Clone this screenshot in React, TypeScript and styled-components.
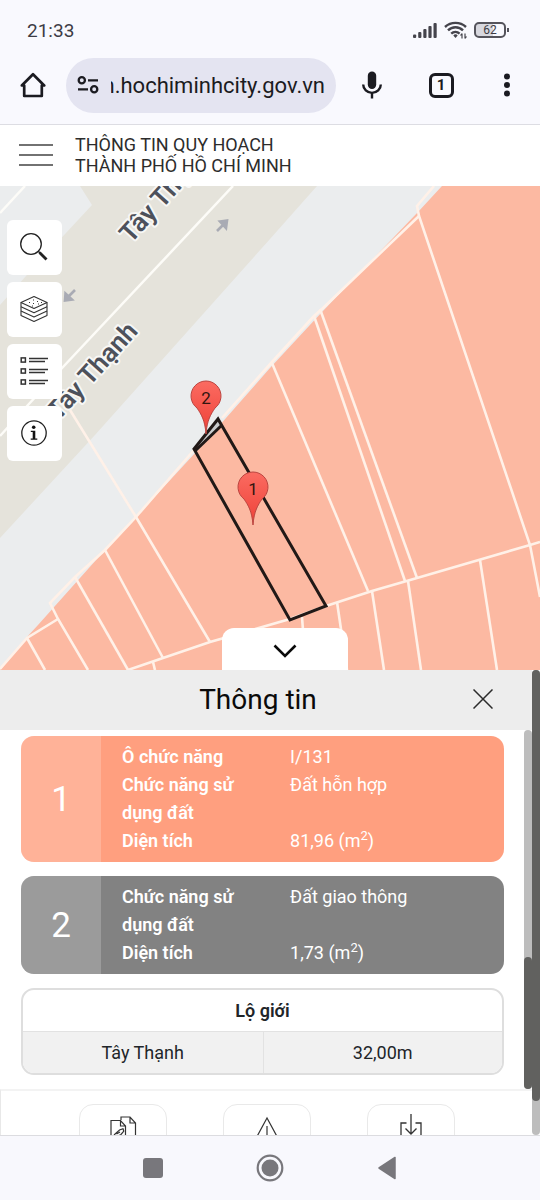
import React from "react";
import styled, { createGlobalStyle } from "styled-components";

const GlobalStyle = createGlobalStyle`
  *, *::before, *::after { box-sizing: border-box; }
  body {
    margin: 0;
    background: #f9f9fe;
    font-family: Roboto, "Noto Sans", sans-serif;
    color: #212529;
  }
  button, input { font: inherit; color: inherit; border: 0; padding: 0; background: none; }
  button { display: inline-flex; align-items: center; justify-content: center; cursor: pointer; }
  svg { display: block; }
`;

const Screen = styled.div`
  display: flex;
  flex-direction: column;
  min-height: 100vh;
  overflow: hidden;
`;

/* ---------- Phone status bar ---------- */

const StatusBar = styled.div`
  display: flex;
  align-items: center;
  justify-content: space-between;
  height: 58px;
  padding: 2px 34px 0 27px;
  font-size: 19px;
  color: #3d3c45;
`;

const StatusIcons = styled.div`
  display: flex;
  align-items: center;
  gap: 7px;
`;

const Battery = styled.span`
  position: relative;
  width: 32px;
  height: 16px;
  border: 2px solid #55545c;
  border-radius: 5px;
  background: linear-gradient(90deg, #d8d8df 60%, #f9f9fe 60%);
  font-size: 12px;
  line-height: 13px;
  text-align: center;

  &::after {
    content: "";
    position: absolute;
    right: -5px;
    top: 4px;
    width: 2px;
    height: 4px;
    background: #55545c;
  }
`;

/* ---------- Browser bar ---------- */

const BrowserBar = styled.div`
  display: flex;
  align-items: center;
  height: 67px;
  padding-bottom: 12px;
  border-bottom: 1px solid #dddde3;
  color: #1b1b21;
`;

const BarButton = styled.button<{ $width: number }>`
  flex: none;
  width: ${(p) => p.$width}px;
  height: 48px;
`;

const AddressPill = styled.label`
  display: flex;
  flex: 1;
  align-items: center;
  gap: 12px;
  min-width: 0;
  height: 55px;
  padding: 0 11px;
  border-radius: 28px;
  background: #e4e4f1;
`;

const AddressInput = styled.input`
  flex: 1;
  min-width: 0;
  padding-top: 2px;
  font-size: 22px;
  line-height: 30px;
  outline: 0;
`;

const TabCount = styled.span`
  display: flex;
  align-items: center;
  justify-content: center;
  width: 25px;
  height: 25px;
  border: 3px solid #1b1b21;
  border-radius: 6px;
  font-size: 15px;
  font-weight: 700;
`;

/* ---------- Site header ---------- */

const SiteHeader = styled.header`
  display: flex;
  align-items: center;
  height: 61px;
  padding-bottom: 2px;
  background: #fff;
`;

const MenuButton = styled.button`
  width: 75px;
  height: 59px;
  padding-right: 4px;
`;

const SiteTitle = styled.h1`
  margin: 0;
  font-size: 18px;
  font-weight: 400;
  line-height: 21px;
  color: #2c2c2c;
`;

/* ---------- Map ---------- */

const MapArea = styled.main`
  position: relative;
  flex: 1;
  min-height: 320px;
`;

const MapDrawing = styled.svg`
  position: absolute;
  inset: 0;
  width: 100%;
  height: 100%;
`;

const MapTools = styled.div`
  position: absolute;
  top: 34px;
  left: 7px;
  display: flex;
  flex-direction: column;
  gap: 7px;
`;

const MapTool = styled.button`
  width: 55px;
  height: 55px;
  padding: 0 2px 2px 0;
  border-radius: 6px;
  background: #fff;
`;

const CollapseRow = styled.div`
  position: absolute;
  bottom: 0;
  left: 0;
  right: 0;
  display: flex;
  justify-content: center;
  padding-left: 30px;
`;

const CollapseTab = styled.button`
  width: 126px;
  height: 42px;
  padding-top: 4px;
  border-radius: 12px 12px 0 0;
  background: #fff;
`;

/* ---------- Bottom sheet ---------- */

const Sheet = styled.section`
  display: flex;
  background: #fff;
`;

const SheetMain = styled.div`
  flex: 1;
  min-width: 0;
`;

const SheetHeader = styled.div`
  display: grid;
  grid-template-columns: 1fr auto 1fr;
  align-items: center;
  height: 60px;
  padding-right: 16px;
  background: #ededed;
`;

const SheetTitle = styled.h2`
  grid-column: 2;
  margin: 0;
  font-size: 28px;
  font-weight: 400;
  line-height: 36px;
  color: #0a0a0a;
`;

const CloseButton = styled.button`
  justify-self: end;
  width: 66px;
  height: 56px;
  padding-bottom: 2px;
`;

const SheetScroll = styled.div`
  display: flex;
`;

const SheetBody = styled.div`
  display: flex;
  flex: 1;
  flex-direction: column;
  gap: 14px;
  min-width: 0;
  padding: 6px 20px 14px 21px;
`;

const ScrollTrack = styled.div`
  flex: none;
  display: flex;
  flex-direction: column;
  width: 8px;
  border-radius: 4px;
  background: #bdbdbd;
`;

const ScrollThumb = styled.div<{ $size: number }>`
  flex: ${(p) => p.$size};
  border-radius: 4px;
  background: #61615f;
`;

const ScrollSpace = styled.div<{ $size: number }>`
  flex: ${(p) => p.$size};
`;

const ZoneCard = styled.article<{ $color: string }>`
  display: flex;
  border-radius: 13px;
  overflow: hidden;
  background: ${(p) => p.$color};
  color: #fff;
`;

const ZoneNumber = styled.div`
  display: flex;
  flex: none;
  align-items: center;
  justify-content: center;
  width: 80px;
  background: rgba(255, 255, 255, 0.2);
  font-size: 35px;
`;

const ZoneFacts = styled.dl`
  display: grid;
  grid-template-columns: 44fr 56fr;
  flex: 1;
  margin: 0;
  padding: 7px 0 7px 21px;
  font-size: 18px;
  line-height: 28px;
`;

const FactName = styled.dt`
  padding-right: 21px;
  font-weight: 600;
`;

const FactValue = styled.dd`
  margin: 0;

  sup {
    font-size: 13px;
    line-height: 0;
  }
`;

const RoadTable = styled.table`
  width: 100%;
  border: 2px solid #dedede;
  border-radius: 13px;
  border-spacing: 0;
  overflow: hidden;
  table-layout: fixed;
  font-size: 18px;
  line-height: 25px;
  text-align: center;
`;

const RoadHead = styled.th`
  padding: 8px;
  font-weight: 600;
`;

const RoadCell = styled.td`
  padding: 8px;
  border-top: 1px solid #e2e2e2;
  background: #f1f1f1;

  & + & { border-left: 1px solid #e2e2e2; }
`;

const SheetActions = styled.div`
  display: flex;
  justify-content: center;
  gap: 56px;
  height: 46px;
  padding-top: 13px;
  border-top: 2px solid #f3f3f3;
  border-left: 1px solid #e8e8e8;
  overflow: hidden;
`;

const ActionButton = styled.button`
  flex: none;
  align-items: flex-start;
  width: 88px;
  height: 88px;
  padding-top: 8px;
  border: 1px solid #e9e9e9;
  border-radius: 14px;
`;

/* ---------- Phone navigation ---------- */

const PhoneNav = styled.nav`
  display: flex;
  align-items: center;
  justify-content: center;
  height: 65px;
  border-top: 1px solid #dcdce0;
  background: #f8f8fd;
`;

const PhoneNavButton = styled.button`
  width: 117px;
  height: 48px;
`;

/* ---------- Icons ---------- */

const SignalIcon = () => (
  <svg width="24" height="17" viewBox="0 0 24 17" fill="#45444c">
    <rect x="0" y="12.500" width="3.200" height="3.500" rx="1" />
    <rect x="5.200" y="10" width="3.200" height="6" rx="1" />
    <rect x="10.300" y="7" width="3.200" height="9" rx="1" />
    <rect x="15.400" y="4" width="3.200" height="12" rx="1" />
    <rect x="20.500" y="1" width="3.200" height="15" rx="1" />
  </svg>
);

const WifiIcon = () => (
  <svg width="23" height="18" viewBox="0 0 23 18" fill="none" stroke="#45444c" strokeWidth="2.4">
    <path d="M1 6a15.500 15.500 0 0 1 21 0" />
    <path d="M4 9.400a10.500 10.500 0 0 1 15 0" />
    <path d="M7.200 12.600a6.200 6.200 0 0 1 8.400 0" />
    <path d="M9.300 14.400a3.200 3.200 0 0 1 4.400 0L11.500 17z" fill="#45444c" stroke="none" />
    <path d="M18 12.500v5M16.500 14.500l1.500-2M21 12.500v5M22.500 15.500l-1.500 2" strokeWidth="1.200" />
  </svg>
);

const HomeIcon = () => (
  <svg width="26" height="26" viewBox="0 0 26 26" fill="none" stroke="currentColor" strokeWidth="2.700" strokeLinejoin="round" strokeLinecap="round">
    <path d="M1.800 13.500 13 2.200l11.200 11.300H21.800V24H4.200V13.500z" />
  </svg>
);

const TuneIcon = () => (
  <svg width="22" height="18" viewBox="0 0 22 18" fill="none" stroke="currentColor" strokeWidth="2.300">
    <circle cx="4.800" cy="4.300" r="3.100" />
    <path d="M11 4.300h10M1 13.300h10" />
    <circle cx="17.200" cy="13.300" r="3.100" />
  </svg>
);

const MicIcon = () => (
  <svg width="22" height="28" viewBox="0 0 22 28">
    <rect x="6.800" y="0.500" width="8.400" height="17.500" rx="4.200" fill="currentColor" />
    <path d="M2.200 13.500a8.800 8.400 0 0 0 17.600 0M11 22v5.500" fill="none" stroke="currentColor" strokeWidth="2.400" />
  </svg>
);

const DotsIcon = () => (
  <svg width="8" height="24" viewBox="0 0 8 24" fill="currentColor">
    <circle cx="4" cy="3.500" r="3" />
    <circle cx="4" cy="12" r="3" />
    <circle cx="4" cy="20.500" r="3" />
  </svg>
);

const MenuIcon = () => (
  <svg width="36" height="24" viewBox="0 0 36 24" stroke="#444" strokeWidth="1.500">
    <path d="M1 2h34M1 12h34M1 22h34" />
  </svg>
);

const SearchIcon = () => (
  <svg width="28" height="28" viewBox="0 0 28 28" fill="none" stroke="#222">
    <circle cx="11" cy="11" r="10.300" strokeWidth="1.300" />
    <path d="M18.300 18.300l2 2" strokeWidth="1.500" />
    <path d="M19.500 19.500l7 7" strokeWidth="2.800" />
  </svg>
);

const LayersIcon = () => (
  <svg width="28" height="28" viewBox="0 0 28 28" fill="none" stroke="#333" strokeWidth="1.100" strokeLinejoin="round">
    <path d="M14 1.500 27 7.500l-13 6L1 7.500z" />
    <path d="M1 7.500V20.500L14 26.500l13-6V7.500" />
    <path d="M1 11.800l13 6 13-6M1 16.100l13 6 13-6" />
    <path d="M9 7.500h1M13 5h1M13 8.500h1M17 6.500h1M18 9h1M12 11h1M21 7.500h1" strokeWidth="1" />
  </svg>
);

const ListIcon = () => (
  <svg width="28" height="28" viewBox="0 0 28 28" fill="none" stroke="#333">
    {[0, 11, 22].map((y) => (
      <g key={y}>
        <rect x="1.200" y={y + 0.900} width="4.200" height="4.200" strokeWidth="1.500" />
        <path d={`M9 ${y + 1.500}h19M9 ${y + 4.500}h16`} strokeWidth="1.400" />
      </g>
    ))}
  </svg>
);

const InfoIcon = () => (
  <svg width="28" height="28" viewBox="0 0 28 28">
    <circle cx="14" cy="14" r="12.200" fill="none" stroke="#222" strokeWidth="1.300" />
    <circle cx="13.700" cy="8.300" r="1.800" fill="#111" />
    <path d="M10.800 11.800h4.500v7.700h2v1.300h-6.600v-1.300h2v-6.400h-1.900z" fill="#111" />
  </svg>
);

const ChevronIcon = () => (
  <svg width="24" height="14" viewBox="0 0 24 14" fill="none" stroke="#0a0a0a" strokeWidth="2.600">
    <path d="M1.500 1.500 12 12 22.500 1.500" />
  </svg>
);

const CloseIcon = () => (
  <svg width="20" height="20" viewBox="0 0 20 20" stroke="#2b2b2b" strokeWidth="1.500">
    <path d="M.5.500l19 19M19.500.500l-19 19" />
  </svg>
);

const DocumentsIcon = () => (
  <svg width="28" height="32" viewBox="0 0 28 32" fill="none" stroke="#333" strokeWidth="1.200">
    <path d="M2 31V7.500h9.500l5 5.500V31M11.500 7.500V13h5" />
    <path d="M12 7V4h9l5.500 6v21M21 4v6h5.500" />
    <path d="M5 22l5.500-5 3.500-1.200.8 2.400-2.800 3.300-5 2.500M7.500 21l3.500-2" />
  </svg>
);

const WarningIcon = () => (
  <svg width="28" height="32" viewBox="0 0 28 32" fill="none" stroke="#333" strokeWidth="1.200">
    <path d="M14 5 1 29h26z" />
    <path d="M14 13v9" />
  </svg>
);

const DownloadIcon = () => (
  <svg width="28" height="32" viewBox="0 0 28 32" fill="none" stroke="#333" strokeWidth="1.300">
    <path d="M14 1v20M8.500 15.500 14 21l5.500-5.500" />
    <path d="M9.500 10H4v18h20V10h-5.500" />
  </svg>
);

/* ---------- Map contents ---------- */

const PARCEL_LINES = [
  "M434 186 417 206 419 216 530 545 540 597",
  "M419 216 322 309 314 316 272 362 222 418",
  "M320 309 417 578",
  "M314 316 405 581",
  "M272 363 368 591",
  "M194 450 136 517 105 550 75 577 50 603 58 619 88 670",
  "M70 410 136 517 210 642",
  "M105 550 163 658",
  "M75 577 128 670",
  "M58 619 27 638 0 669",
  "M27 638 45 670",
  "M128 670 163 658 210 642 290 619 326 606 372 591 417 578 530 545 540 542",
  "M153 662 155 670",
  "M302 617 306 670",
  "M337 602 347 670",
  "M372 591 384 670",
  "M408 581 421 670",
  "M480 560 497 670",
];

const Pin = ({ x, y, label }: { x: number; y: number; label: string }) => (
  <g>
    <path
      d={`M${x} ${y + 53}c-1-14-5-20-9-26a15 15 0 1 1 18 0c-4 6-8 12-9 26z`}
      fill="url(#pinFill)"
      stroke="#bb4540"
      strokeWidth="1"
    />
    <text x={x} y={y + 23} fontSize="17" textAnchor="middle" fill="#33150f">
      {label}
    </text>
  </g>
);

const StreetName = ({ x, y, end }: { x: number; y: number; end?: boolean }) => (
  <text
    transform={`translate(${x} ${y}) rotate(-48)`}
    textAnchor={end ? "end" : "start"}
    fontSize="26"
    fontWeight="600"
    fill="#4d515b"
    stroke="#f7f7f5"
    strokeWidth="4"
    strokeLinejoin="round"
    paintOrder="stroke"
  >
    Tây Thạnh
  </text>
);

const CityMap = () => (
  <MapDrawing viewBox="0 186 540 484" preserveAspectRatio="xMidYMid slice" role="img" aria-label="Bản đồ">
    <defs>
      <linearGradient id="pinFill" x1="0" y1="0" x2="0" y2="1">
        <stop offset="0" stopColor="#fb6b61" />
        <stop offset="1" stopColor="#ee4138" />
      </linearGradient>
    </defs>
    <rect x="0" y="186" width="540" height="484" fill="#ebedee" />
    <path d="M80 186 92 205 26 276 0 305V538L95 435 270 239 317 186z" fill="#e5e3db" />
    <path d="M442 186 418 212 322 312 270 368 196 452 136 517 105 550 38 625 26 638 0 670H540V186z" fill="#fcb9a2" />
    <g fill="none" stroke="#fdfcf8" strokeWidth="2.500">
      <path d="M233 186 63 367 28 405 0 436" />
      <path d="M25 186 0 213" />
    </g>
    <g fill="none" stroke="#fff1e8" strokeWidth="2.600">
      {PARCEL_LINES.map((d) => (
        <path key={d} d={d} />
      ))}
    </g>
    <g fill="none" stroke="#a9abb4" strokeWidth="2.600">
      <path d="M217 231 225 223M220 221.500l7-1-1 7.500z" fill="#a9abb4" />
      <path d="M75 290 67 298M65.500 293.500l-.5 7 7-1z" fill="#a9abb4" />
    </g>
    <StreetName x={131} y={244} />
    <StreetName x={139} y={332} end />
    <path d="M194 449 218 419 222 425 196 452z" fill="#c9cbcd" />
    <g fill="none" stroke="#211917" strokeWidth="3">
      <path d="M194 449 218 419 326 606 290 620z" />
      <path d="M195 451 222 425" />
    </g>
    <Pin x={206} y={381} label="2" />
    <Pin x={253} y={472} label="1" />
  </MapDrawing>
);

/* ---------- Data ---------- */

type Fact = { name: string; value: string; area?: boolean };
type Zone = { id: number; color: string; facts: Fact[] };

const zones: Zone[] = [
  {
    id: 1,
    color: "#ff9f7f",
    facts: [
      { name: "Ô chức năng", value: "I/131" },
      { name: "Chức năng sử dụng đất", value: "Đất hỗn hợp" },
      { name: "Diện tích", value: "81,96", area: true },
    ],
  },
  {
    id: 2,
    color: "#828282",
    facts: [
      { name: "Chức năng sử dụng đất", value: "Đất giao thông" },
      { name: "Diện tích", value: "1,73", area: true },
    ],
  },
];

const mapTools = [
  { label: "Tìm kiếm", icon: <SearchIcon /> },
  { label: "Lớp bản đồ", icon: <LayersIcon /> },
  { label: "Chú giải", icon: <ListIcon /> },
  { label: "Thông tin", icon: <InfoIcon /> },
];

const actions = [
  { label: "Tài liệu", icon: <DocumentsIcon /> },
  { label: "Cảnh báo", icon: <WarningIcon /> },
  { label: "Tải xuống", icon: <DownloadIcon /> },
];

const Scrollbar = ({ before, size, after }: { before: number; size: number; after: number }) => (
  <ScrollTrack aria-hidden="true">
    <ScrollSpace $size={before} />
    <ScrollThumb $size={size} />
    <ScrollSpace $size={after} />
  </ScrollTrack>
);

export default function App() {
  return (
    <Screen>
      <GlobalStyle />
      <StatusBar>
        <span>21:33</span>
        <StatusIcons>
          <SignalIcon />
          <WifiIcon />
          <Battery>62</Battery>
        </StatusIcons>
      </StatusBar>

      <BrowserBar>
        <BarButton $width={66} aria-label="Home">
          <HomeIcon />
        </BarButton>
        <AddressPill>
          <TuneIcon />
          <AddressInput dir="rtl" aria-label="Address" defaultValue="h.hochiminhcity.gov.vn" />
        </AddressPill>
        <BarButton $width={72} aria-label="Voice search">
          <MicIcon />
        </BarButton>
        <BarButton $width={66} aria-label="Tabs">
          <TabCount>1</TabCount>
        </BarButton>
        <BarButton $width={66} aria-label="More">
          <DotsIcon />
        </BarButton>
      </BrowserBar>

      <SiteHeader>
        <MenuButton aria-label="Menu">
          <MenuIcon />
        </MenuButton>
        <SiteTitle>
          THÔNG TIN QUY HOẠCH
          <br />
          THÀNH PHỐ HỒ CHÍ MINH
        </SiteTitle>
      </SiteHeader>

      <MapArea>
        <CityMap />
        <MapTools>
          {mapTools.map((tool) => (
            <MapTool key={tool.label} aria-label={tool.label}>
              {tool.icon}
            </MapTool>
          ))}
        </MapTools>
        <CollapseRow>
          <CollapseTab aria-label="Thu gọn">
            <ChevronIcon />
          </CollapseTab>
        </CollapseRow>
      </MapArea>

      <Sheet>
        <SheetMain>
          <SheetHeader>
            <SheetTitle>Thông tin</SheetTitle>
            <CloseButton aria-label="Đóng">
              <CloseIcon />
            </CloseButton>
          </SheetHeader>
          <SheetScroll>
            <SheetBody>
              {zones.map((zone) => (
                <ZoneCard key={zone.id} $color={zone.color}>
                  <ZoneNumber>{zone.id}</ZoneNumber>
                  <ZoneFacts>
                    {zone.facts.map((fact) => (
                      <React.Fragment key={fact.name}>
                        <FactName>{fact.name}</FactName>
                        <FactValue>
                          {fact.value}
                          {fact.area && (
                            <>
                              {" (m"}
                              <sup>2</sup>)
                            </>
                          )}
                        </FactValue>
                      </React.Fragment>
                    ))}
                  </ZoneFacts>
                </ZoneCard>
              ))}
              <RoadTable>
                <thead>
                  <tr>
                    <RoadHead colSpan={2}>Lộ giới</RoadHead>
                  </tr>
                </thead>
                <tbody>
                  <tr>
                    <RoadCell>Tây Thạnh</RoadCell>
                    <RoadCell>32,00m</RoadCell>
                  </tr>
                </tbody>
              </RoadTable>
            </SheetBody>
            <Scrollbar before={227} size={132} after={0} />
          </SheetScroll>
          <SheetActions>
            {actions.map((action) => (
              <ActionButton key={action.label} aria-label={action.label}>
                {action.icon}
              </ActionButton>
            ))}
          </SheetActions>
        </SheetMain>
        <Scrollbar before={0} size={431} after={34} />
      </Sheet>

      <PhoneNav>
        <PhoneNavButton aria-label="Recent apps">
          <svg width="20" height="20" viewBox="0 0 20 20">
            <rect width="20" height="20" rx="3" fill="#78777c" />
          </svg>
        </PhoneNavButton>
        <PhoneNavButton aria-label="Home screen">
          <svg width="28" height="28" viewBox="0 0 28 28">
            <circle cx="14" cy="14" r="12.300" fill="none" stroke="#78777c" strokeWidth="2.200" />
            <circle cx="14" cy="14" r="8.500" fill="#78777c" />
          </svg>
        </PhoneNavButton>
        <PhoneNavButton aria-label="Back">
          <svg width="20" height="24" viewBox="0 0 20 24">
            <path d="M2 12 18 1.500v21z" fill="#78777c" stroke="#78777c" strokeWidth="1.500" strokeLinejoin="round" />
          </svg>
        </PhoneNavButton>
      </PhoneNav>
    </Screen>
  );
}
